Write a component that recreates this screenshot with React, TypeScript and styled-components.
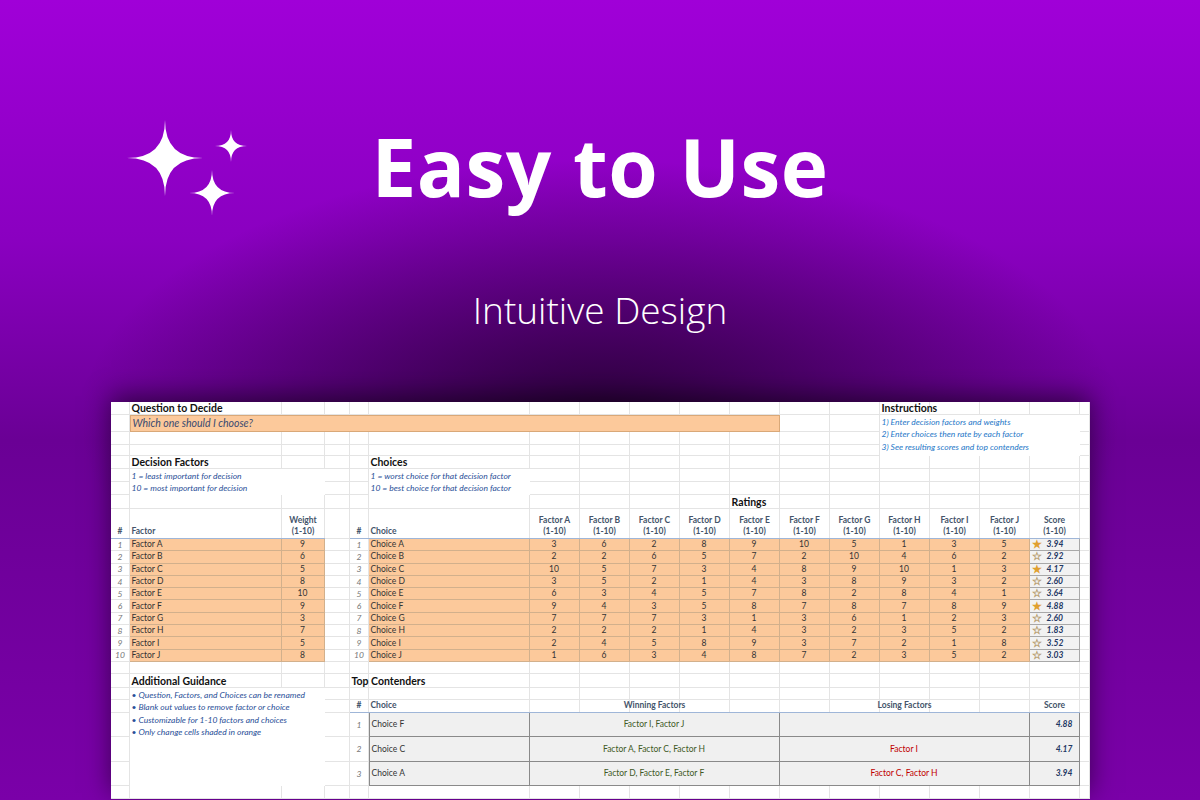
import React from 'react';
import styled, { createGlobalStyle } from 'styled-components';

const Global = createGlobalStyle`
  html, body { margin: 0; padding: 0; }
  body { width: 1200px; height: 800px; overflow: hidden; }
`;

const COLS = [19, 152, 43, 25, 19, 161, 50, 50, 50, 50, 50, 50, 50, 50, 50, 50, 50, 10];
const ROWS = [13, 17, 13, 11, 13, 13, 13, 14, 30, ...Array(10).fill(12.3), 12, 14, 12, 13, 24.5, 24.5, 24.5, 13];
const FACTORS = ['A', 'B', 'C', 'D', 'E', 'F', 'G', 'H', 'I', 'J'];
const WEIGHTS = [9, 6, 5, 8, 10, 9, 3, 7, 5, 8];
const RATINGS = [
  [3, 6, 2, 8, 9, 10, 5, 1, 3, 5],
  [2, 2, 6, 5, 7, 2, 10, 4, 6, 2],
  [10, 5, 7, 3, 4, 8, 9, 10, 1, 3],
  [3, 5, 2, 1, 4, 3, 8, 9, 3, 2],
  [6, 3, 4, 5, 7, 8, 2, 8, 4, 1],
  [9, 4, 3, 5, 8, 7, 8, 7, 8, 9],
  [7, 7, 7, 3, 1, 3, 6, 1, 2, 3],
  [2, 2, 2, 1, 4, 3, 2, 3, 5, 2],
  [2, 4, 5, 8, 9, 3, 7, 2, 1, 8],
  [1, 6, 3, 4, 8, 7, 2, 3, 5, 2],
];
const SCORES = ['3.94', '2.92', '4.17', '2.60', '3.64', '4.88', '2.60', '1.83', '3.52', '3.03'];
const CONTENDERS = [
  ['Choice F', 'Factor I, Factor J', '', '4.88'],
  ['Choice C', 'Factor A, Factor C, Factor H', 'Factor I', '4.17'],
  ['Choice A', 'Factor D, Factor E, Factor F', 'Factor C, Factor H', '3.94'],
];

const Page = styled.div`
  width: 1200px;
  height: 800px;
  overflow: hidden;
  background:
    radial-gradient(ellipse 520px 260px at 600px 420px, rgba(30, 0, 40, 0.85), rgba(30, 0, 40, 0) 100%),
    linear-gradient(180deg, #a000d8 0%, #8a00c0 30%, #6a0095 55%, #7a00a8 100%);
  display: flex;
  flex-direction: column;
  align-items: center;
`;

const Hero = styled.div`
  position: relative;
  width: 1200px;
  height: 402px;
  display: flex;
  flex-direction: column;
  align-items: center;
  flex-shrink: 0;
`;

const Sparkles = styled.svg`
  position: absolute;
  left: 126px;
  top: 118px;
`;

const Title = styled.h1`
  margin: 126px 0 0;
  font-family: 'Open Sans', sans-serif;
  font-weight: 700;
  font-size: 80px;
  line-height: 80px;
  color: #fff;
  letter-spacing: 0.5px;
`;

const Subtitle = styled.div`
  margin-top: 84px;
  font-family: 'Open Sans', sans-serif;
  font-weight: 300;
  font-size: 37px;
  line-height: 40px;
  color: #fff;
`;

const Sheet = styled.div`
  display: grid;
  grid-template-columns: ${COLS.map((c) => c + 'px').join(' ')};
  grid-template-rows: ${ROWS.map((r) => r + 'px').join(' ')};
  background: #fff;
  box-shadow: 0 -6px 24px rgba(0, 0, 0, 0.5);
  font-family: Lato, 'Liberation Sans', sans-serif;
  font-size: 8.5px;
  color: #333;
  flex-shrink: 0;
`;

type Pos = { $c: number; $r: number; $cs?: number; $rs?: number };

const Grid = styled.div<Pos>`
  grid-column: ${(p) => p.$c} / span ${(p) => p.$cs ?? 1};
  grid-row: ${(p) => p.$r} / span ${(p) => p.$rs ?? 1};
  border-right: 1px solid #e4e4e4;
  border-bottom: 1px solid #e4e4e4;
`;

const Cell = styled.div<Pos & { $align?: string }>`
  grid-column: ${(p) => p.$c} / span ${(p) => p.$cs ?? 1};
  grid-row: ${(p) => p.$r} / span ${(p) => p.$rs ?? 1};
  display: flex;
  align-items: flex-end;
  justify-content: ${(p) => p.$align ?? 'flex-start'};
  padding: 0 2px 1px;
  white-space: nowrap;
  z-index: 1;
  min-width: 0;
`;

const Heading = styled(Cell)`
  font-weight: 700;
  font-size: 10.5px;
  color: #111;
`;

const Note = styled(Cell)`
  flex-direction: column;
  align-items: flex-start;
  justify-content: flex-start;
  background: #fff;
  font-style: italic;
  color: ${(p) => (p.$align === 'light' ? '#1f78c8' : '#2a4f98')};
  line-height: 12.3px;
  padding-top: 1px;
`;

const Question = styled(Cell)`
  align-items: center;
  background: #fcc99b;
  border: 1px solid #d9a878;
  font-style: italic;
  font-size: 10.5px;
  color: #3a4a70;
`;

const ColHead = styled(Cell)`
  flex-direction: column;
  align-items: ${(p) => (p.$align === 'left' ? 'flex-start' : 'center')};
  justify-content: flex-end;
  font-weight: 700;
  color: #44546a;
  line-height: 11px;
  border-bottom: 1.5px solid #9fb6d8;
`;

const RowNum = styled(Cell)`
  font-style: italic;
  color: #777;
  justify-content: center;
  align-items: center;
`;

const Orange = styled(Cell)`
  align-items: center;
  background: #fcc99b;
  border-right: 1px solid #d2b08c;
  border-bottom: 1px solid #d2b08c;
  color: #333;
`;

const Score = styled(Cell)`
  align-items: center;
  background: #f2f2f2;
  border-right: 1px solid #a8a8a8;
  border-bottom: 1px solid #a8a8a8;
  font-style: italic;
  font-weight: 700;
  color: #1f3864;
  gap: 5px;
`;

const Star = styled.span<{ $fill: boolean }>`
  font-size: 11px;
  line-height: 10px;
  font-style: normal;
  color: ${(p) => (p.$fill ? '#e0a030' : '#b59a6a')};
`;

const Box = styled(Cell)<{ $tone?: string }>`
  align-items: center;
  background: #f0f0f0;
  border: 1px solid #8a8a8a;
  border-top: none;
  border-left: none;
  color: ${(p) => p.$tone ?? '#333'};
`;

const BoxScore = styled(Box)`
  font-style: italic;
  font-weight: 700;
  color: #1f3864;
  justify-content: flex-end;
  padding-right: 6px;
`;

const Star4 = ({ cx, cy, r }: { cx: number; cy: number; r: number }) => (
  <path
    d={`M${cx} ${cy - r} Q${cx} ${cy} ${cx + r} ${cy} Q${cx} ${cy} ${cx} ${cy + r} Q${cx} ${cy} ${cx - r} ${cy} Q${cx} ${cy} ${cx} ${cy - r}Z`}
    fill="#fff"
  />
);

export default function App() {
  const fillers = [];
  for (let r = 1; r <= ROWS.length; r++)
    for (let c = 1; c <= COLS.length; c++) fillers.push(<Grid key={`${r}-${c}`} $c={c} $r={r} />);

  return (
    <Page>
      <Global />
      <Hero>
        <Sparkles width="130" height="110" viewBox="0 0 130 110">
          <Star4 cx={39} cy={40} r={38} />
          <Star4 cx={105} cy={28} r={16} />
          <Star4 cx={86} cy={75} r={23} />
        </Sparkles>
        <Title>Easy to Use</Title>
        <Subtitle>Intuitive Design</Subtitle>
      </Hero>
      <Sheet>
        {fillers}
        <Heading $c={2} $r={1} $cs={3}>Question to Decide</Heading>
        <Question $c={2} $r={2} $cs={10}>Which one should I choose?</Question>
        <Heading $c={14} $r={1} $cs={3}>Instructions</Heading>
        <Note $c={14} $r={2} $cs={4} $rs={3} $align="light">
          <span>1) Enter decision factors and weights</span>
          <span>2) Enter choices then rate by each factor</span>
          <span>3) See resulting scores and top contenders</span>
        </Note>

        <Heading $c={2} $r={5} $cs={2}>Decision Factors</Heading>
        <Note $c={2} $r={6} $cs={2} $rs={2}>
          <span>1 = least important for decision</span>
          <span>10 = most important for decision</span>
        </Note>
        <Heading $c={6} $r={5}>Choices</Heading>
        <Note $c={6} $r={6} $cs={1} $rs={2}>
          <span>1 = worst choice for that decision factor</span>
          <span>10 = best choice for that decision factor</span>
        </Note>
        <Heading $c={11} $r={8} $cs={2}>Ratings</Heading>

        <ColHead $c={1} $r={9}>#</ColHead>
        <ColHead $c={2} $r={9} $align="left">Factor</ColHead>
        <ColHead $c={3} $r={9}><span>Weight</span><span>(1-10)</span></ColHead>
        <ColHead $c={5} $r={9}>#</ColHead>
        <ColHead $c={6} $r={9} $align="left">Choice</ColHead>
        {FACTORS.map((f, i) => (
          <ColHead key={f} $c={7 + i} $r={9}><span>Factor {f}</span><span>(1-10)</span></ColHead>
        ))}
        <ColHead $c={17} $r={9}><span>Score</span><span>(1-10)</span></ColHead>

        {FACTORS.map((f, i) => (
          <React.Fragment key={f}>
            <RowNum $c={1} $r={10 + i}>{i + 1}</RowNum>
            <Orange $c={2} $r={10 + i}>Factor {f}</Orange>
            <Orange $c={3} $r={10 + i} $align="center">{WEIGHTS[i]}</Orange>
            <RowNum $c={5} $r={10 + i}>{i + 1}</RowNum>
            <Orange $c={6} $r={10 + i}>Choice {f}</Orange>
            {RATINGS[i].map((v, j) => (
              <Orange key={j} $c={7 + j} $r={10 + i} $align="center">{v}</Orange>
            ))}
            <Score $c={17} $r={10 + i}>
              <Star $fill={parseFloat(SCORES[i]) >= 3.9}>
                {parseFloat(SCORES[i]) >= 3.9 ? '★' : '☆'}
              </Star>
              {SCORES[i]}
            </Score>
          </React.Fragment>
        ))}

        <Heading $c={2} $r={21} $cs={2}>Additional Guidance</Heading>
        <Note $c={2} $r={22} $cs={2} $rs={5}>
          <span>• Question, Factors, and Choices can be renamed</span>
          <span>• Blank out values to remove factor or choice</span>
          <span>• Customizable for 1-10 factors and choices</span>
          <span>• Only change cells shaded in orange</span>
        </Note>
        <Heading $c={5} $r={21} $cs={3}>Top Contenders</Heading>
        <ColHead $c={5} $r={23}>#</ColHead>
        <ColHead $c={6} $r={23} $align="left">Choice</ColHead>
        <ColHead $c={7} $r={23} $cs={5}>Winning Factors</ColHead>
        <ColHead $c={12} $r={23} $cs={5}>Losing Factors</ColHead>
        <ColHead $c={17} $r={23}>Score</ColHead>
        {CONTENDERS.map(([name, win, lose, score], i) => (
          <React.Fragment key={name}>
            <RowNum $c={5} $r={24 + i}>{i + 1}</RowNum>
            <Box $c={6} $r={24 + i} style={{ borderLeft: '1px solid #8a8a8a' }}>{name}</Box>
            <Box $c={7} $r={24 + i} $cs={5} $align="center" $tone="#3f5a26">{win}</Box>
            <Box $c={12} $r={24 + i} $cs={5} $align="center" $tone="#c00000">{lose}</Box>
            <BoxScore $c={17} $r={24 + i}>{score}</BoxScore>
          </React.Fragment>
        ))}
      </Sheet>
    </Page>
  );
}
